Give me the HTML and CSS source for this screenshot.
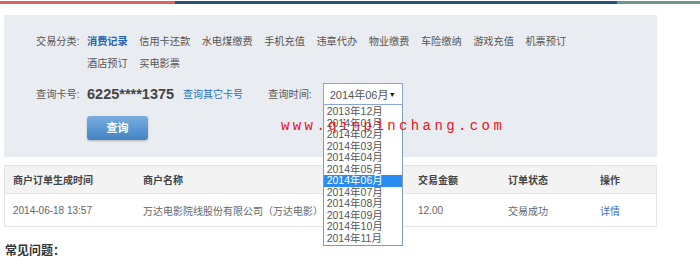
FILE: index.html
```html
<!DOCTYPE html>
<html lang="zh-CN">
<head>
    <meta charset="UTF-8">
    <title>交易记录查询</title>
    <link rel="stylesheet" href="styles.css">
</head>
<body>
<div class="topbar">
    <div class="bar-red"></div>
    <div class="bar-blue"></div>
    <div class="bar-teal"></div>
</div>
<div class="page">
    <div class="panel">
        <div class="cat-row">
            <span class="label">交易分类:</span>
            <ul class="cat-list">
                <li class="active">消费记录</li>
                <li>信用卡还款</li>
                <li>水电煤缴费</li>
                <li>手机充值</li>
                <li>违章代办</li>
                <li>物业缴费</li>
                <li>车险缴纳</li>
                <li>游戏充值</li>
                <li>机票预订</li>
                <li>酒店预订</li>
                <li>买电影票</li>
            </ul>
        </div>
        <div class="query-row">
            <span class="label">查询卡号:</span>
            <span class="card-no">6225****1375</span>
            <a class="link other-card">查询其它卡号</a>
            <span class="label time-label">查询时间:</span>
            <div class="select-wrap">
                <div class="select-box">
                    <span>2014年06月</span>
                    <span class="arrow">&#9660;</span>
                </div>
                <ul class="options">
                    <li>2013年12月</li>
                    <li>2014年01月</li>
                    <li>2014年02月</li>
                    <li>2014年03月</li>
                    <li>2014年04月</li>
                    <li>2014年05月</li>
                    <li class="selected">2014年06月</li>
                    <li>2014年07月</li>
                    <li>2014年08月</li>
                    <li>2014年09月</li>
                    <li>2014年10月</li>
                    <li>2014年11月</li>
                </ul>
            </div>
        </div>
        <div class="btn-row">
            <div class="btn">查询</div>
            <div class="watermark">www.qinpinchang.com</div>
        </div>
    </div>

    <div class="table">
        <div class="tr th">
            <div>商户订单生成时间</div>
            <div>商户名称</div>
            <div>交易金额</div>
            <div>订单状态</div>
            <div>操作</div>
        </div>
        <div class="tr td">
            <div>2014-06-18 13:57</div>
            <div>万达电影院线股份有限公司（万达电影）</div>
            <div>12.00</div>
            <div>交易成功</div>
            <div class="link">详情</div>
        </div>
    </div>

    <div class="faq-title">常见问题：</div>
</div>
</body>
</html>
```

FILE: styles.css
```css
body {
    margin: 0;
    font-family: "Liberation Sans", "Noto Sans CJK SC", sans-serif;
    color: #555;
    background: #fff;
}

.topbar {
    display: flex;
    height: 3px;
    margin-top: 1px;
}
.bar-red {
    width: 175px;
    background-color: #e2615a;
}
.bar-blue {
    width: 442px;
    background-color: #27527f;
}
.bar-teal {
    flex: 1;
    background-color: #6f9593;
}

.page {
    width: 653px;
    padding-left: 4px;
}

.panel {
    margin-top: 11px;
    background-color: #e9edf2;
    padding: 16px 0 17px 32px;
}

.label {
    font-size: 10.2px;
    color: #555;
}

.cat-row {
    display: flex;
}
.cat-row .label {
    width: 51px;
    line-height: 22px;
}
.cat-list {
    list-style: none;
    margin: 0;
    padding: 0;
    width: 500px;
    display: flex;
    flex-wrap: wrap;
    column-gap: 11.5px;
}
.cat-list li {
    font-size: 10.2px;
    line-height: 22px;
    color: #555;
}
.cat-list li.active {
    color: #2764b0;
    font-weight: bold;
}

.query-row {
    display: flex;
    align-items: center;
    height: 21px;
    margin-top: 8px;
}
.query-row .label {
    width: 51px;
}
.card-no {
    font-size: 14.5px;
    font-weight: bold;
    color: #444;
    margin-top: 1px;
}
.link {
    color: #2f6fba;
}
.other-card {
    font-size: 10px;
    margin-left: 9px;
}
.query-row .time-label {
    width: auto;
    margin-left: 25px;
    margin-right: 11px;
}

.select-wrap {
    position: relative;
    width: 80px;
    height: 21px;
}
.select-box {
    box-sizing: border-box;
    height: 22px;
    border: 1px solid #8aa6d6;
    background: #fff;
    display: flex;
    align-items: center;
    justify-content: space-between;
    padding: 0 6px 0 6px;
    font-size: 11px;
    color: #555;
}
.select-box .arrow {
    font-size: 7px;
    color: #111;
}
.options {
    position: absolute;
    top: 22px;
    left: 0;
    z-index: 5;
    box-sizing: border-box;
    width: 80px;
    margin: 0;
    padding: 1px 0;
    list-style: none;
    background: #fff;
    border: 1px solid #7f9db9;
    border-top: none;
}
.options li {
    height: 11.5px;
    line-height: 11.5px;
    font-size: 10.5px;
    color: #555;
    padding-left: 3px;
}
.options li.selected {
    background-color: #2a8cf0;
    color: #fff;
}

.btn-row {
    position: relative;
    margin-top: 12px;
    padding-left: 51px;
}
.btn {
    width: 61px;
    height: 24px;
    line-height: 24px;
    text-align: center;
    font-size: 11px;
    font-weight: bold;
    color: #fff;
    border-radius: 3px;
    background: linear-gradient(#78afe0, #4382c4);
    box-shadow: 0 1px 2px rgba(0, 0, 0, 0.25);
}
.watermark {
    position: absolute;
    left: 245px;
    top: 3px;
    z-index: 10;
    font-family: "Liberation Mono", monospace;
    font-size: 14px;
    letter-spacing: 3.4px;
    color: #e8141c;
    line-height: 14px;
}

.table {
    margin-top: 8px;
    border: 1px solid #e2e4e6;
}
.tr {
    display: grid;
    grid-template-columns: 130px 275px 90px 92px 1fr;
    padding-left: 8px;
    align-items: center;
    font-size: 10px;
}
.th {
    height: 27px;
    background-color: #f3f3f3;
    border-bottom: 1px solid #e6e6e6;
    font-weight: bold;
    color: #444;
}
.td {
    height: 32px;
    color: #666;
}
.td .link {
    color: #2f6fba;
}

.faq-title {
    margin: 14px 0 0 1px;
    font-size: 12px;
    font-weight: bold;
    color: #333;
}
```
